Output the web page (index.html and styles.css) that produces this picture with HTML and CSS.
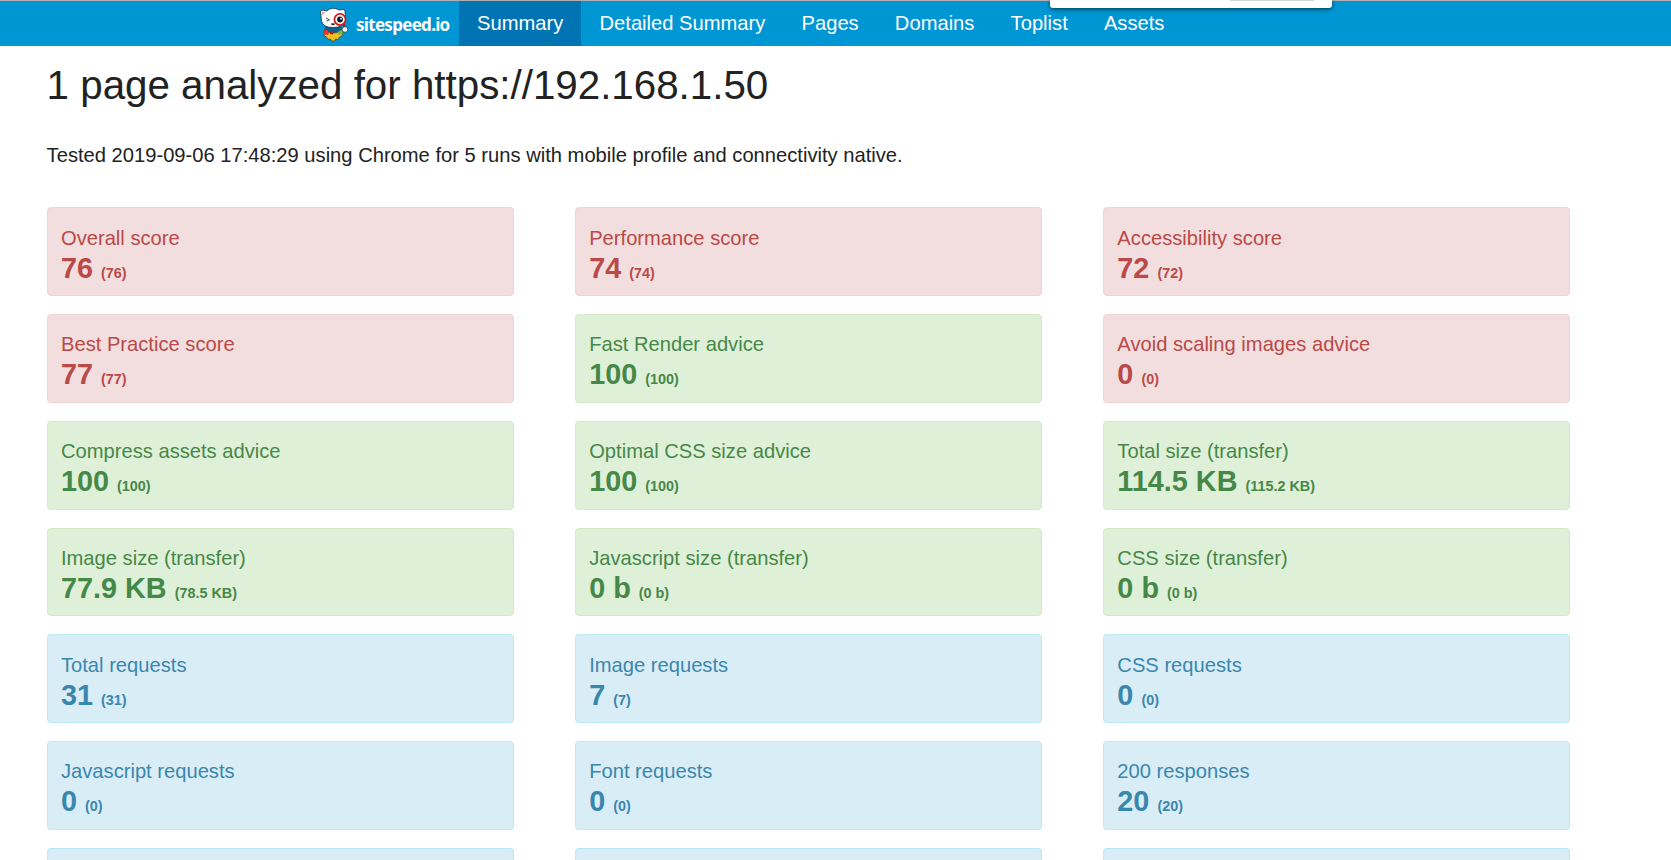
FILE: index.html
```html
<!DOCTYPE html>
<html lang="en">
<head>
<meta charset="utf-8">
<title>sitespeed.io summary</title>
<link rel="stylesheet" href="styles.css">
</head>
<body>
<nav class="navbar">
  <a class="brand">
    <svg class="mascot" width="30" height="36" viewBox="0 0 30 36">
      <path d="M6 19 L22 19 L24 24 L21 29 L8 29 L5 24 Z" fill="#0e5f8c"/>
      <path d="M4.500 24 Q14 28 24 24 L23 29 L20.500 30 L19 32.500 L16.500 32 L15.500 34 L12.500 34 L11.500 32 L9 32.500 L7.500 30 L5.500 29 Z" fill="#f0c020" stroke="#4f4924" stroke-width=".8"/>
      <path d="M4 23.500 L8 23 L10 25.500 L9 28 L5 27.500 Z" fill="#e5392c"/>
      <path d="M18.500 25 L23.500 22.500 L23.500 27 L19.500 28 Z" fill="#78b843"/>
      <path d="M11 24.500 L14 25.500 L14 27.500 L11 27 Z" fill="#a52020"/>
      <path d="M1.500 4 L3 3 L7.500 4 Q13.500 -1 20 3 L25 2.500 L26 4 L26.500 13 Q25 20.500 14 20.500 Q4 20.500 2.500 14 Z" fill="#fff" stroke="#25313a" stroke-width=".8"/>
      <path d="M3 4.500 L6 5.500 L3.500 8.500 Z" fill="#d9a7a7"/>
      <path d="M7 11 L10.500 12.800 L7.500 14" fill="none" stroke="#333" stroke-width=".9"/>
      <path d="M12.500 16.500 Q14 18.500 15.500 16.500" fill="none" stroke="#222" stroke-width="1.4"/>
      <path d="M24.500 17 L26.500 22" stroke="#a51d22" stroke-width="2.2"/>
      <circle cx="21" cy="12.500" r="5.600" fill="#fff" stroke="#c61e25" stroke-width="1.8"/>
      <circle cx="21" cy="12.500" r="2.900" fill="#171b1e"/>
      <circle cx="22" cy="11.700" r=".9" fill="#fff"/>
      <circle cx="26" cy="22.500" r="2.800" fill="#fff" stroke="#25313a" stroke-width=".7"/>
    </svg>
    <span class="brand-name">sitespeed.io</span>
  </a>
  <a class="nav-link active">Summary</a>
  <a class="nav-link">Detailed Summary</a>
  <a class="nav-link">Pages</a>
  <a class="nav-link">Domains</a>
  <a class="nav-link">Toplist</a>
  <a class="nav-link">Assets</a>
  <div class="popup"><div class="popup-button"></div></div>
</nav>
<main class="container">
  <h1 class="title">1 page analyzed for https://192.168.1.50</h1>
  <p class="tested">Tested 2019-09-06 17:48:29 using Chrome for 5 runs with mobile profile and connectivity native.</p>
  <section class="cards">
    <div class="card error"><div class="label">Overall score</div><div class="value">76 <small>(76)</small></div></div>
    <div class="card error"><div class="label">Performance score</div><div class="value">74 <small>(74)</small></div></div>
    <div class="card error"><div class="label">Accessibility score</div><div class="value">72 <small>(72)</small></div></div>
    <div class="card error"><div class="label">Best Practice score</div><div class="value">77 <small>(77)</small></div></div>
    <div class="card ok"><div class="label">Fast Render advice</div><div class="value">100 <small>(100)</small></div></div>
    <div class="card error"><div class="label">Avoid scaling images advice</div><div class="value">0 <small>(0)</small></div></div>
    <div class="card ok"><div class="label">Compress assets advice</div><div class="value">100 <small>(100)</small></div></div>
    <div class="card ok"><div class="label">Optimal CSS size advice</div><div class="value">100 <small>(100)</small></div></div>
    <div class="card ok"><div class="label">Total size (transfer)</div><div class="value">114.5 KB <small>(115.2 KB)</small></div></div>
    <div class="card ok"><div class="label">Image size (transfer)</div><div class="value">77.9 KB <small>(78.5 KB)</small></div></div>
    <div class="card ok"><div class="label">Javascript size (transfer)</div><div class="value">0 b <small>(0 b)</small></div></div>
    <div class="card ok"><div class="label">CSS size (transfer)</div><div class="value">0 b <small>(0 b)</small></div></div>
    <div class="card info"><div class="label">Total requests</div><div class="value">31 <small>(31)</small></div></div>
    <div class="card info"><div class="label">Image requests</div><div class="value">7 <small>(7)</small></div></div>
    <div class="card info"><div class="label">CSS requests</div><div class="value">0 <small>(0)</small></div></div>
    <div class="card info"><div class="label">Javascript requests</div><div class="value">0 <small>(0)</small></div></div>
    <div class="card info"><div class="label">Font requests</div><div class="value">0 <small>(0)</small></div></div>
    <div class="card info"><div class="label">200 responses</div><div class="value">20 <small>(20)</small></div></div>
    <div class="card info"></div>
    <div class="card info"></div>
    <div class="card info"></div>
  </section>
</main>
</body>
</html>
```

FILE: styles.css
```css
* { box-sizing: border-box; }
html, body { height: 100%; }
body {
  margin: 0;
  overflow: hidden;
  background: #fff;
  color: #222;
  font-family: "Liberation Sans", Arial, sans-serif;
  font-size: 20.16px;
}
.navbar {
  position: relative;
  display: flex;
  height: 46px;
  padding-left: 319px;
  background: #0095d3;
  border-top: 1px solid #b0b0b4;
}
.brand {
  display: flex;
  width: 140px;
  padding-top: 6px;
}
.mascot { flex: none; }
.brand-name {
  margin: 6px 0 0 7px;
  color: #fff;
  font: bold 17px/24px "Noto Sans", sans-serif;
  letter-spacing: -0.7px;
}
.nav-link {
  padding: 0 18.1px;
  color: #fff;
  line-height: 44px;
  white-space: nowrap;
}
.active { background: #0074b2; }
.popup {
  position: absolute;
  left: 1050px;
  top: -1px;
  width: 282px;
  height: 8px;
  background: #fff;
  border-radius: 0 0 3px 3px;
  box-shadow: 0 1px 4px rgba(0, 0, 0, 0.65);
}
.popup-button {
  width: 84px;
  height: 1px;
  margin-left: 180px;
  background: #d3d3d8;
}
.container {
  width: 1523.4px;
  margin-left: 46.6px;
}
.title {
  margin: 0;
  padding-top: 14px;
  font-size: 40.32px;
  font-weight: 400;
  line-height: 50px;
}
.tested {
  margin: 0;
  padding-top: 33px;
  line-height: 24px;
}
.cards {
  display: grid;
  grid-template-columns: repeat(3, 467px);
  grid-template-rows: repeat(6, 88.77px) 12px;
  gap: 18px 61.2px;
  margin-top: 40.3px;
}
.card {
  padding: 17.3px 13.4px 0;
  border: 1px solid;
  border-radius: 4px;
}
.card:nth-last-child(-n+3) {
  border-bottom: 0;
  border-radius: 4px 4px 0 0;
  padding: 0;
}
.error { color: #b94a48; background: #f2dede; border-color: #eed3d7; }
.ok { color: #468847; background: #dff0d8; border-color: #d6e9c6; }
.info { color: #3a87ad; background: #d9edf7; border-color: #bce8f1; }
.label { line-height: 24px; }
.value {
  padding-top: 1px;
  font-size: 28.8px;
  font-weight: 700;
  line-height: 34px;
}
.value small { font-size: 14.4px; }
```
